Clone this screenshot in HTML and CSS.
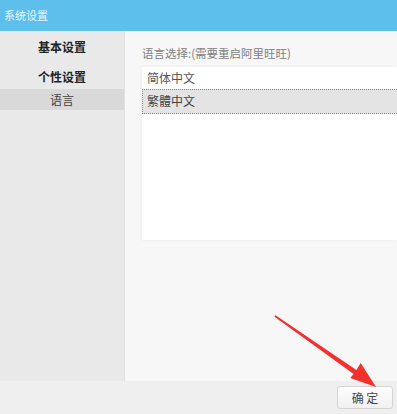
FILE: index.html
```html
<!DOCTYPE html>
<html lang="zh">
<head>
<meta charset="utf-8">
<link rel="stylesheet" href="styles.css">
</head>
<body>
<div class="window">
  <div class="titlebar">系统设置</div>
  <div class="body">
    <div class="sidebar">
      <div class="group">基本设置</div>
      <div class="group second">个性设置</div>
      <div class="item selected">语言</div>
    </div>
    <div class="content">
      <div class="label">语言选择:(需要重启阿里旺旺)</div>
      <div class="listbox">
        <div class="option">简体中文</div>
        <div class="option active">繁體中文</div>
      </div>
    </div>
  </div>
  <div class="footer">
    <button class="ok">确 定</button>
  </div>
  <svg class="arrow" width="397" height="414" viewBox="0 0 397 414">
    <path d="M274.5 316.7 L353.6 374 L350.3 377.9 L376 387 L360.7 363.1 L356.4 370 L275.5 315.3 Z" fill="#f2302e"/>
  </svg>
</div>
</body>
</html>
```
FILE: styles.css
```css
* { box-sizing: border-box; }
html, body { margin: 0; padding: 0; }
body {
  font-family: "Noto Sans CJK SC", "Liberation Sans", sans-serif;
  font-size: 12px;
  color: #333;
  background: #efefef;
}
.window {
  position: relative;
  width: 397px;
  height: 414px;
  display: flex;
  flex-direction: column;
  overflow: hidden;
}
.titlebar {
  height: 31px;
  background: #5cbfec;
  color: #eaf6fc;
  font-size: 11px;
  line-height: 31px;
  padding-left: 4px;
  flex: none;
}
.body {
  display: flex;
  height: 350px;
  flex: none;
}
.sidebar {
  width: 125px;
  background: #e9e9e9;
  border-right: 1px solid #e2e2e2;
  padding-top: 7px;
}
.group {
  height: 17px;
  line-height: 17px;
  text-align: center;
  font-weight: bold;
  color: #222;
  font-size: 12px;
}
.group.second { margin-top: 13px; }
.item {
  margin-top: 4px;
  height: 21px;
  line-height: 21px;
  text-align: center;
  color: #444;
}
.selected { background: #d9d9d9; }
.content {
  flex: 1;
  background: #f7f7f7;
  padding: 13px 0 0 17px;
}
.label {
  color: #808080;
  height: 18px;
  line-height: 18px;
  font-size: 11.5px;
}
.listbox {
  margin-top: 5px;
  background: #fff;
  height: 173px;
  padding-top: 1px;
  box-shadow: 0 0 3px rgba(0,0,0,0.06);
}
.option {
  height: 21px;
  line-height: 20px;
  padding-left: 5px;
  color: #555;
}
.option.active {
  background: #e4e4e4;
  border-top: 1px dotted #888;
  border-bottom: 1px dotted #888;
  border-left: 1px dotted #888;
  height: 25px;
  line-height: 22px;
  padding-left: 4px;
  color: #444;
}
.footer {
  flex: 1;
  background: #efefef;
  display: flex;
  justify-content: flex-end;
  align-items: flex-start;
  padding: 5px 4px 0 0;
}
.ok {
  width: 56px;
  height: 23px;
  border: 1px solid #d4d4d4;
  border-radius: 3px;
  background: linear-gradient(#fdfdfd, #f1f1f1);
  font-family: "Noto Sans CJK SC", sans-serif;
  font-size: 12px;
  color: #444;
  padding: 0;
}
.arrow {
  position: absolute;
  left: 0;
  top: 0;
  pointer-events: none;
}
```
